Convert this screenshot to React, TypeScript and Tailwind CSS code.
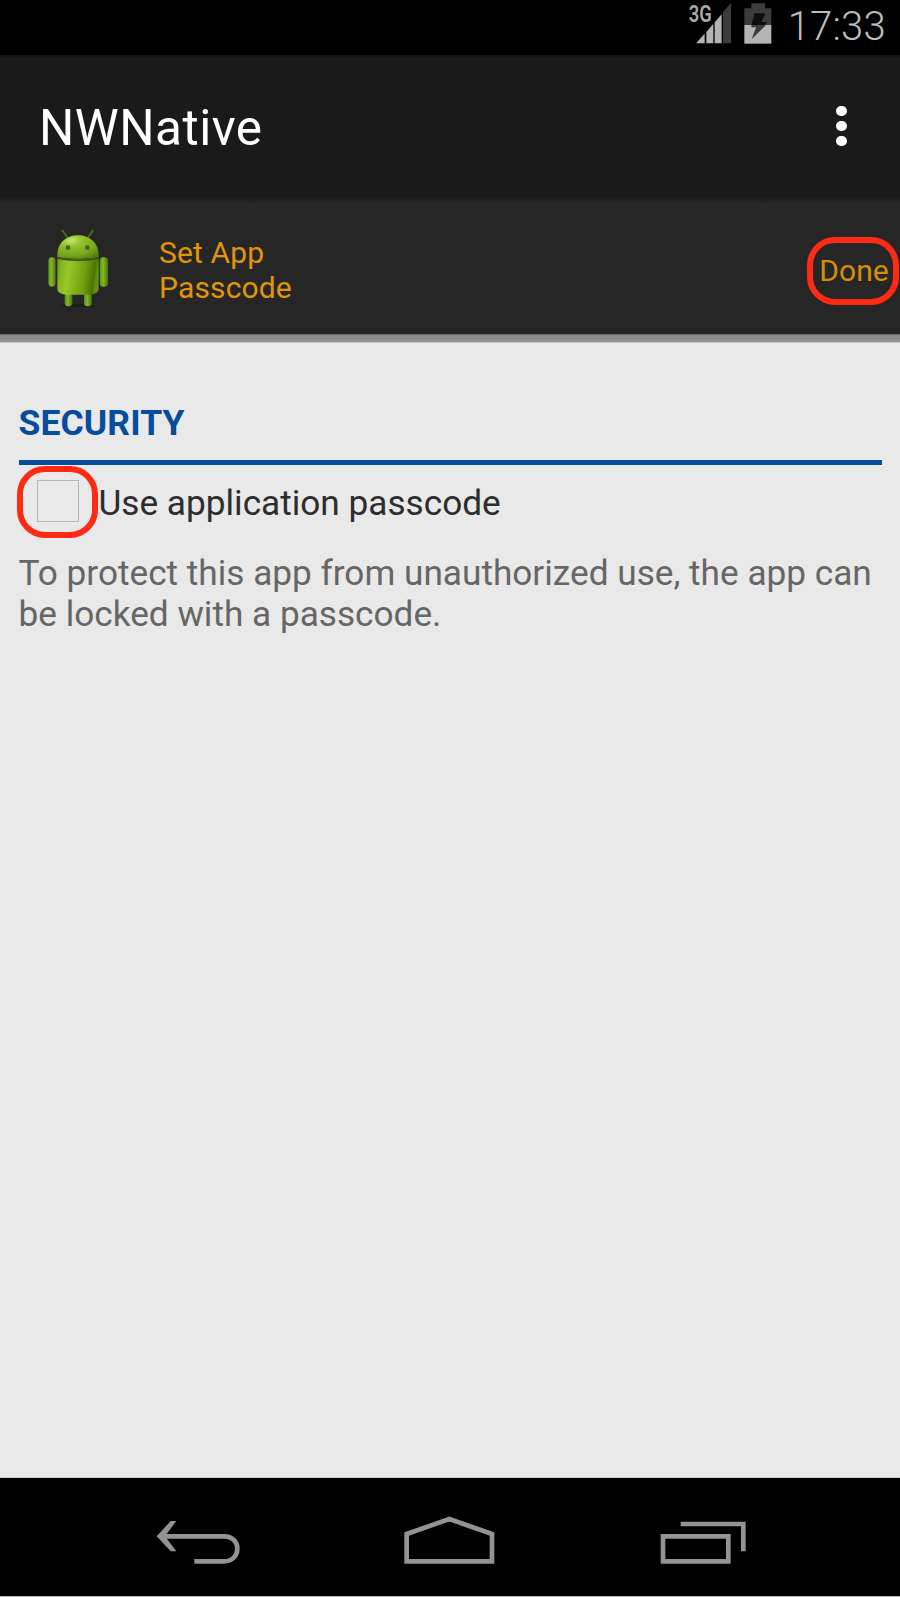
function SignalIcon() {
  return (
    <svg className="block h-[48px] w-[46px]" viewBox="50 0 138 144">
      <text x="55" y="66" fontSize="69" fontWeight="600" fill="#a9a9a9" fontFamily="Roboto, sans-serif" textLength="69" lengthAdjust="spacingAndGlyphs">3G</text>
      <path d="M158 130V37L182 8V130Z" fill="#3c3c3c" />
      <path d="M77 130L103 101V130ZM108 130V96L129 71V130ZM133 130V67L154 43V130Z" fill="#b4b4b4" />
    </svg>
  );
}

function BatteryIcon() {
  return (
    <svg className="block h-[48px] w-[30px]" viewBox="218 0 90 144">
      <path d="M243 10H284V25H303V76H222V25H243Z" fill="#3c3c3c" />
      <path d="M222 75H303V131H222Z" fill="#b4b4b4" />
      <path d="M253 40H285L273 66H290L283 75H243Z" fill="#0d0d0d" />
      <path d="M243 75H287L244 118L257 82H243Z" fill="#3c3c3c" />
    </svg>
  );
}

function AndroidIcon() {
  return (
    <svg className="block h-[90px] w-[76px]" viewBox="0 0 228 270">
      <defs>
        <linearGradient id="torso" x1="0" x2="1" y1="0" y2="0.12">
          <stop offset="0" stopColor="#65931a" />
          <stop offset="0.12" stopColor="#85b71d" />
          <stop offset="0.3" stopColor="#94c926" />
          <stop offset="0.7" stopColor="#70a00f" />
          <stop offset="0.93" stopColor="#497504" />
          <stop offset="1" stopColor="#60901a" />
        </linearGradient>
        <radialGradient id="head" cx="0.34" cy="0.22" r="0.85">
          <stop offset="0" stopColor="#c5e76e" />
          <stop offset="0.3" stopColor="#91c32d" />
          <stop offset="0.75" stopColor="#73a51a" />
          <stop offset="1" stopColor="#55820b" />
        </radialGradient>
        <linearGradient id="limb" x1="0" x2="1" y1="0" y2="0">
          <stop offset="0" stopColor="#5c8b16" />
          <stop offset="0.4" stopColor="#85b825" />
          <stop offset="1" stopColor="#4a7607" />
        </linearGradient>
      </defs>
      <ellipse cx="113" cy="251" rx="51" ry="5" fill="#1b1b1b" />
      <path d="M67 25L82 46M159 25L145 46" stroke="#4e7518" strokeWidth="5" strokeLinecap="round" />
      <rect x="74" y="208" width="23" height="45" rx="10" fill="url(#limb)" />
      <rect x="132" y="208" width="23" height="45" rx="10" fill="url(#limb)" />
      <rect x="25" y="106" width="22" height="88" rx="10" fill="url(#limb)" />
      <rect x="179" y="106" width="25" height="88" rx="11" fill="url(#limb)" />
      <path d="M52 105V99C52 64 78 40 114 40S176 64 176 99V105Q114 118 52 105Z" fill="url(#head)" />
      <path d="M52 110Q114 123 176 110V202Q176 216 148 218H80Q52 216 52 202Z" fill="url(#torso)" />
      <path d="M52 107Q114 119 176 107" fill="none" stroke="#446a0b" strokeWidth="4" />
      <circle cx="84" cy="77" r="7" fill="#426512" />
      <circle cx="142" cy="77" r="7" fill="#426512" />
    </svg>
  );
}

function BackIcon() {
  return (
    <svg className="block h-[53.33px] w-[85px]" viewBox="80 160 255 160" fill="none" stroke="#939393" strokeWidth="14">
      <path d="M195 302H284C310 302 324 284 324 264S310 227 284 227H100" />
      <path d="M124 181H141L107 227L141 272H124L82 227Z" fill="#939393" stroke="none" />
    </svg>
  );
}

function HomeIcon() {
  return (
    <svg className="block h-[53.33px] w-[95px]" viewBox="815 160 285 160" fill="none" stroke="#939393" strokeWidth="14">
      <path d="M832 302V220L960 175L1088 220V302Z" />
    </svg>
  );
}

function RecentsIcon() {
  return (
    <svg className="block h-[53.33px] w-[90px]" viewBox="475 160 270 160" fill="none" stroke="#939393" strokeWidth="14">
      <path d="M490 227H686V302H490ZM543 190H731V272" />
    </svg>
  );
}

export default function App() {
  return (
    <div className="flex h-[1597px] w-[900px] flex-col overflow-hidden bg-[#e9e9e9] font-['Roboto',sans-serif]">
      <header className="flex h-[55px] shrink-0 items-start bg-black pl-[686.67px]">
        <SignalIcon />
        <div className="ml-[10px]"><BatteryIcon /></div>
        <time className="ml-[15px] mt-[3px] text-[40px] leading-[48px] font-light tracking-[0.2px] text-[#bdbdbd]">17:33</time>
      </header>

      <div className="flex h-[143px] shrink-0 items-start justify-between border-t-2 border-[#131313] bg-[#1a1a1a] pr-[53.5px] pl-[39px]">
        <h1 className="mt-[41px] text-[49.5px] leading-[60px] tracking-[0.5px] text-white">NWNative</h1>
        <button type="button" aria-label="More options" className="mt-[49px] flex flex-col gap-[4.8px]">
          <span className="size-[10.3px] rounded-full bg-white" />
          <span className="size-[10.3px] rounded-full bg-white" />
          <span className="size-[10.3px] rounded-full bg-white" />
        </button>
      </div>

      <div className="flex h-[136px] shrink-0 items-start bg-linear-to-b from-[#1c1c1c] to-[#262626] to-[6px] pl-[40px]">
        <div className="mt-[24px]"><AndroidIcon /></div>
        <p className="mt-[36.5px] ml-[43px] w-[150px] text-[30px] leading-[35.2px] tracking-[0.15px] text-[#e1950b]">Set App Passcode</p>
        <button type="button" className="mt-[39px] mr-px ml-auto flex h-[68px] w-[92px] items-center justify-center rounded-[28px] border-[6px] border-[#ff2a14] pl-[2px] text-[30px] leading-none text-[#d48f08]">Done</button>
      </div>
      <div className="h-[8px] shrink-0 bg-linear-to-b from-[#626262] via-[#888] via-20% to-[#929292]" />
      <div className="h-px shrink-0 bg-[#c9c9c9]" />

      <main className="flex grow flex-col px-[18.5px] pt-[60px]">
        <h2 className="h-[57px] text-[35.5px] leading-[40px] font-bold tracking-[0.1px] text-[#064d9d]">SECURITY</h2>
        <div className="h-[5px] shrink-0 bg-[#064d9d]" />
        <label className="-ml-[1.5px] mt-px flex h-[72px] items-start">
          <span className="flex h-[72px] w-[81px] shrink-0 items-start rounded-[28px] border-[6px] border-[#ff2a14] pt-[8px] pl-[14px]">
            <span className="size-[42px] border-[1.5px] border-[#b5b5b5]" />
          </span>
          <span className="mt-[16px] ml-[0.5px] text-[35.2px] leading-[42px] whitespace-nowrap text-[#2d2d2d]">Use application passcode</span>
        </label>
        <p className="mt-[15px] w-[870px] text-[35.2px] leading-[41px] text-[#666]">
          To protect this app from unauthorized use, the app can<br />be locked with a passcode.
        </p>
      </main>

      <div className="h-px shrink-0 bg-[#cfcfcf]" />
      <nav className="flex h-[118px] shrink-0 items-start bg-black pt-[36px] pl-[156.3px]">
        <BackIcon />
        <div className="ml-[160px]"><HomeIcon /></div>
        <div className="ml-[162px]"><RecentsIcon /></div>
      </nav>
      <div className="h-px shrink-0 bg-[#b5b5b5]" />
    </div>
  );
}
